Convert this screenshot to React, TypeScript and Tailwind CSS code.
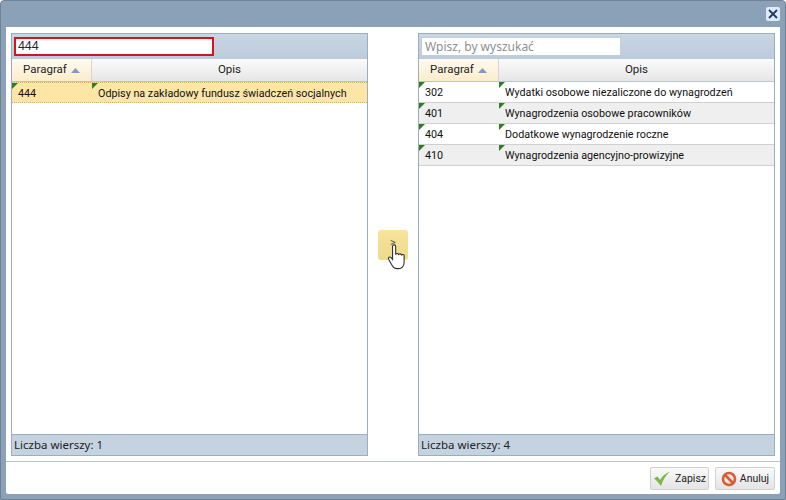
import React from 'react';

type Row = { code: string; desc: string };

const leftRows: Row[] = [{ code: '444', desc: 'Odpisy na zakładowy fundusz świadczeń socjalnych' }];
const rightRows: Row[] = [
  { code: '302', desc: 'Wydatki osobowe niezaliczone do wynagrodzeń' },
  { code: '401', desc: 'Wynagrodzenia osobowe pracowników' },
  { code: '404', desc: 'Dodatkowe wynagrodzenie roczne' },
  { code: '410', desc: 'Wynagrodzenia agencyjno-prowizyjne' },
];

const Corner = () => (
  <svg width="6" height="6" viewBox="0 0 6 6" className="absolute left-0 top-0">
    <path d="M0 0H6L0 6Z" fill="#2e7d1e" />
  </svg>
);

const SortArrow = () => (
  <svg width="9" height="5" viewBox="0 0 9 5" className="ml-[4px]">
    <path d="M4.5 0L9 5H0Z" fill="#7d9cc4" />
  </svg>
);

const Panel = ({ rows, selected, search }: { rows: Row[]; selected?: boolean; search?: string }) => (
  <div className="flex h-[423px] w-[357px] flex-col border border-[#99aec2] bg-white">
    {/* toolbar */}
    <div className="flex h-[25px] shrink-0 items-start bg-gradient-to-b from-[#c9d6e3] to-[#bccbdb] pl-[2px] pt-[3px]">
      {search ? (
        <div className="flex h-[19px] w-[200px] items-center border-2 border-[#d8121c] bg-white pb-[1px] pl-[2px] font-['Noto_Sans',sans-serif] text-[12px] text-[#222]">
          {search}
        </div>
      ) : (
        <div className="flex h-[19px] w-[200px] items-center border border-[#c4ccd4] bg-white pl-[3px] font-['Noto_Sans',sans-serif] text-[12px] text-[#8f8f8f]">
          Wpisz, by wyszukać
        </div>
      )}
    </div>
    {/* header */}
    <div className="flex h-[23px] shrink-0 border-b border-[#b8c4d0] text-[11.5px] text-[#222]">
      <div className="flex w-[80px] shrink-0 items-center justify-center border-r border-[#d6d6d6] bg-gradient-to-b from-[#fffaf0] to-[#fdeccb]">
        Paragraf
        <SortArrow />
      </div>
      <div className="flex flex-1 items-center justify-center bg-gradient-to-b from-[#fbfbfb] to-[#e6e6e6]">Opis</div>
    </div>
    {/* rows */}
    <div className="min-h-0 flex-1">
      {rows.map((row, i) => (
        <div
          key={row.code}
          className={
            selected
              ? 'flex h-[21px] items-center border-y border-dotted border-[#c9b27a] bg-[#fde5a6] text-[10.75px] text-[#111]'
              : i % 2 === 0
                ? 'flex h-[21px] items-center border-b border-[#d0d0d0] bg-white text-[10.75px] text-[#111]'
                : 'flex h-[21px] items-center border-b border-[#d0d0d0] bg-[#efefef] text-[10.75px] text-[#111]'
          }
        >
          <div className="relative flex h-full w-[80px] shrink-0 items-center whitespace-nowrap pl-[6px] pt-[3px]">
            <Corner />
            {row.code}
          </div>
          <div className="relative flex h-full flex-1 items-center whitespace-nowrap pl-[6px] pt-[3px]">
            <Corner />
            {row.desc}
          </div>
        </div>
      ))}
    </div>
    {/* footer */}
    <div className="flex h-[21px] shrink-0 items-center border-t border-[#99aec2] bg-[#c5d3e1] pl-[2px] font-['Noto_Sans',sans-serif] text-[11.5px] text-[#222]">
      Liczba wierszy: {rows.length}
    </div>
  </div>
);

export default function App() {
  return (
    <div className="flex h-[500px] w-[786px] flex-col overflow-hidden rounded-t-[4px] border border-[#6f8296] bg-[#8aa1b8] px-[5px] pb-[5px] font-['Roboto',sans-serif]">
      {/* title bar */}
      <div className="flex h-[26px] shrink-0 items-start justify-end pt-[6px]">
        <button className="flex h-[14px] w-[14px] items-center justify-center rounded-[2px] bg-[#dfeaf7]">
          <svg width="10" height="10" viewBox="0 0 10 10">
            <path d="M1 1L9 9M9 1L1 9" stroke="#1c3c66" strokeWidth="1.8" />
          </svg>
        </button>
      </div>

      <div className="flex min-h-0 flex-1 flex-col rounded-b-[2px] bg-white">
        {/* content */}
        <div className="flex h-[435px] shrink-0 items-start justify-between border-b border-[#b7c6d4] px-[5px] pt-[6px]">
          <Panel rows={leftRows} selected search="444" />
          <div className="relative mt-[197px] h-[30px] w-[30px] rounded-[3px] bg-gradient-to-b from-[#f8e49c] to-[#edda88] text-center text-[11px] leading-[26px] text-[#555]">
            &gt;
            <svg width="20" height="28" viewBox="0 0 18 24" className="absolute left-[9px] top-[13px]">
              <path
                d="M5 2.5a1.4 1.4 0 0 1 2.8 0V10a1.3 1.3 0 0 1 2.6.3 1.3 1.3 0 0 1 2.6.4 1.2 1.2 0 0 1 2.4.6V17c0 3-2 5.5-5 5.5H9c-2 0-3.5-1-4.5-3L1.5 14c-.8-1.6 1.2-2.6 2.2-1.4L5 14.2Z"
                fill="#fff"
                stroke="#333"
                strokeWidth="1"
              />
            </svg>
          </div>
          <Panel rows={rightRows} />
        </div>

        {/* buttons */}
        <div className="flex flex-1 items-start justify-end gap-[6px] pr-[5px] pt-[5px] text-[10.5px] text-[#222]">
          <button className="flex h-[23px] w-[59px] items-center justify-center gap-[4px] rounded-[2px] border border-[#d0d0d0] bg-gradient-to-b from-[#fafafa] to-[#e4e4e4]">
            <svg width="18" height="17" viewBox="0 0 18 16">
              <path d="M1 8L4.5 6L7 9.5C9 6 12 3 17 1C12.5 5 10 9.5 8 15.5C5.5 12 3.5 10 1 8Z" fill="#7ab648" />
            </svg>
            Zapisz
          </button>
          <button className="flex h-[23px] w-[60px] items-center justify-center gap-[3px] rounded-[2px] border border-[#d0d0d0] bg-gradient-to-b from-[#fafafa] to-[#e4e4e4]">
            <svg width="16" height="16" viewBox="0 0 16 16">
              <circle cx="8" cy="8" r="6" fill="#f6e6dc" stroke="#d2603a" strokeWidth="2.6" />
              <path d="M4 4L12 12" stroke="#d2603a" strokeWidth="2.6" />
            </svg>
            Anuluj
          </button>
        </div>
      </div>
    </div>
  );
}
